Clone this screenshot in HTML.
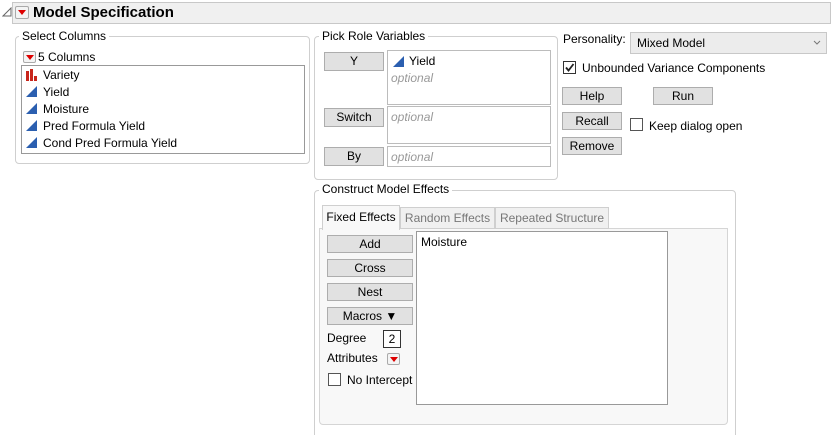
<!DOCTYPE html>
<html style="height:435px;overflow:hidden"><head><style>
*{box-sizing:border-box;margin:0;padding:0}
body{width:831px;height:435px;background:#fff;font-family:"Liberation Sans",sans-serif;font-size:12px;color:#000;position:relative;overflow:hidden}
.a{position:absolute}
.t{position:absolute;white-space:nowrap;line-height:14px}
.grp{position:absolute;border:1px solid #cfcfcf;border-radius:4px}
.lbl{position:absolute;background:#fff;padding:0 3px;line-height:14px;white-space:nowrap}
.btn{position:absolute;background:#e1e1e1;border:1px solid #adadad;text-align:center;line-height:16px}
.box{position:absolute;border:1px solid #bcbcbc;background:#fff}
.opt{color:#999;font-style:italic}
.red{position:absolute;width:13px;height:12px;border:1px solid #aaa;border-radius:2px;background:#f4f4f4}
.red:after{content:"";position:absolute;left:2px;top:3px;border-left:4px solid transparent;border-right:4px solid transparent;border-top:5px solid #d00}
.cb{position:absolute;width:13px;height:13px;border:1px solid #333;background:#fff}
</style></head><body>
<div class="a" style="left:12px;top:2px;width:819px;height:22px;background:#f0f0f0;border:1px solid #c8c8c8"></div>
<svg class="a" style="left:2px;top:7px" width="10" height="10"><path d="M1 9 L9 9 L9 1 Z" fill="none" stroke="#666"/></svg>
<div class="red" style="left:15px;top:6px;width:14px;height:13px"></div>
<div class="t" style="left:33px;top:4px;font-size:15px;font-weight:bold;line-height:18px">Model Specification</div>

<div class="grp" style="left:15px;top:36px;width:295px;height:128px"></div>
<div class="lbl" style="left:19px;top:29px">Select Columns</div>
<div class="red" style="left:23px;top:51px"></div>
<div class="t" style="left:38px;top:50px">5 Columns</div>
<div class="box" style="left:21px;top:65px;width:284px;height:89px;border-color:#999"></div>
<svg class="a" style="left:26px;top:69px" width="12" height="12"><rect x="0" y="2" width="3" height="10" fill="#c8261c"/><rect x="4" y="0" width="3" height="12" fill="#c8261c"/><rect x="8" y="7" width="3" height="5" fill="#c8261c"/></svg>
<div class="t" style="left:43px;top:68px">Variety</div>
<svg class="a" style="left:26px;top:86px" width="11" height="11"><path d="M0 11 L11 0 L11 11Z" fill="#2b5fb0"/></svg>
<div class="t" style="left:43px;top:85px">Yield</div>
<svg class="a" style="left:26px;top:103px" width="11" height="11"><path d="M0 11 L11 0 L11 11Z" fill="#2b5fb0"/></svg>
<div class="t" style="left:43px;top:102px">Moisture</div>
<svg class="a" style="left:26px;top:120px" width="11" height="11"><path d="M0 11 L11 0 L11 11Z" fill="#2b5fb0"/></svg>
<div class="t" style="left:43px;top:119px">Pred Formula Yield</div>
<svg class="a" style="left:26px;top:137px" width="11" height="11"><path d="M0 11 L11 0 L11 11Z" fill="#2b5fb0"/></svg>
<div class="t" style="left:43px;top:136px">Cond Pred Formula Yield</div>

<div class="grp" style="left:314px;top:36px;width:244px;height:144px"></div>
<div class="lbl" style="left:319px;top:29px">Pick Role Variables</div>
<div class="btn" style="left:324px;top:52px;width:60px;height:19px">Y</div>
<div class="box" style="left:387px;top:50px;width:164px;height:55px"></div>
<svg class="a" style="left:393px;top:56px" width="11" height="11"><path d="M0 11 L11 0 L11 11Z" fill="#2b5fb0"/></svg>
<div class="t" style="left:409px;top:54px">Yield</div>
<div class="t opt" style="left:391px;top:71px">optional</div>
<div class="btn" style="left:324px;top:108px;width:60px;height:19px">Switch</div>
<div class="box" style="left:387px;top:106px;width:164px;height:38px"></div>
<div class="t opt" style="left:391px;top:110px">optional</div>
<div class="btn" style="left:324px;top:147px;width:60px;height:19px">By</div>
<div class="box" style="left:387px;top:146px;width:164px;height:21px"></div>
<div class="t opt" style="left:391px;top:150px">optional</div>

<div class="t" style="left:563px;top:32px">Personality:</div>
<div class="a" style="left:630px;top:32px;width:197px;height:22px;background:#ececec;border:1px solid #c8c8c8"></div>
<div class="t" style="left:637px;top:36px">Mixed Model</div>
<svg class="a" style="left:813px;top:40px" width="8" height="6"><path d="M1 1 L4 4 L7 1" fill="none" stroke="#777"/></svg>
<div class="cb" style="left:563px;top:61px"></div>
<svg class="a" style="left:564px;top:62px" width="11" height="11"><path d="M2 5.5 L4.5 8.5 L9.5 2" fill="none" stroke="#222" stroke-width="1.8"/></svg>
<div class="t" style="left:582px;top:61px">Unbounded Variance Components</div>
<div class="btn" style="left:562px;top:87px;width:60px;height:18px">Help</div>
<div class="btn" style="left:653px;top:87px;width:60px;height:18px">Run</div>
<div class="btn" style="left:562px;top:112px;width:60px;height:18px">Recall</div>
<div class="btn" style="left:562px;top:137px;width:60px;height:18px">Remove</div>
<div class="cb" style="left:630px;top:118px;border-color:#555"></div>
<div class="t" style="left:649px;top:119px">Keep dialog open</div>

<div class="grp" style="left:314px;top:190px;width:422px;height:255px"></div>
<div class="lbl" style="left:319px;top:182px">Construct Model Effects</div>
<div class="a" style="left:319px;top:228px;width:409px;height:197px;border:1px solid #d5d5d5;border-radius:0 0 4px 4px;background:#f8f8f8"></div>
<div class="a" style="left:400px;top:207px;width:95px;height:22px;background:#f0f0f0;border:1px solid #cfcfcf;color:#777;text-align:center;line-height:20px">Random Effects</div>
<div class="a" style="left:495px;top:207px;width:114px;height:22px;background:#f0f0f0;border:1px solid #cfcfcf;color:#777;text-align:center;line-height:20px">Repeated Structure</div>
<div class="a" style="left:322px;top:205px;width:78px;height:25px;background:#f8f8f8;border:1px solid #cfcfcf;border-bottom:none;text-align:center;line-height:22px">Fixed Effects</div>
<div class="btn" style="left:327px;top:235px;width:86px;height:18px">Add</div>
<div class="btn" style="left:327px;top:259px;width:86px;height:18px">Cross</div>
<div class="btn" style="left:327px;top:283px;width:86px;height:18px">Nest</div>
<div class="btn" style="left:327px;top:307px;width:86px;height:18px">Macros &#9660;</div>
<div class="t" style="left:327px;top:331px">Degree</div>
<div class="box" style="left:383px;top:330px;width:18px;height:18px;border-color:#333;text-align:center;line-height:16px">2</div>
<div class="t" style="left:327px;top:351px">Attributes</div>
<div class="red" style="left:387px;top:353px"></div>
<div class="cb" style="left:328px;top:373px;border-color:#555"></div>
<div class="t" style="left:347px;top:373px">No Intercept</div>
<div class="box" style="left:416px;top:231px;width:252px;height:174px;border-color:#999"></div>
<div class="t" style="left:421px;top:235px">Moisture</div>
</body></html>
